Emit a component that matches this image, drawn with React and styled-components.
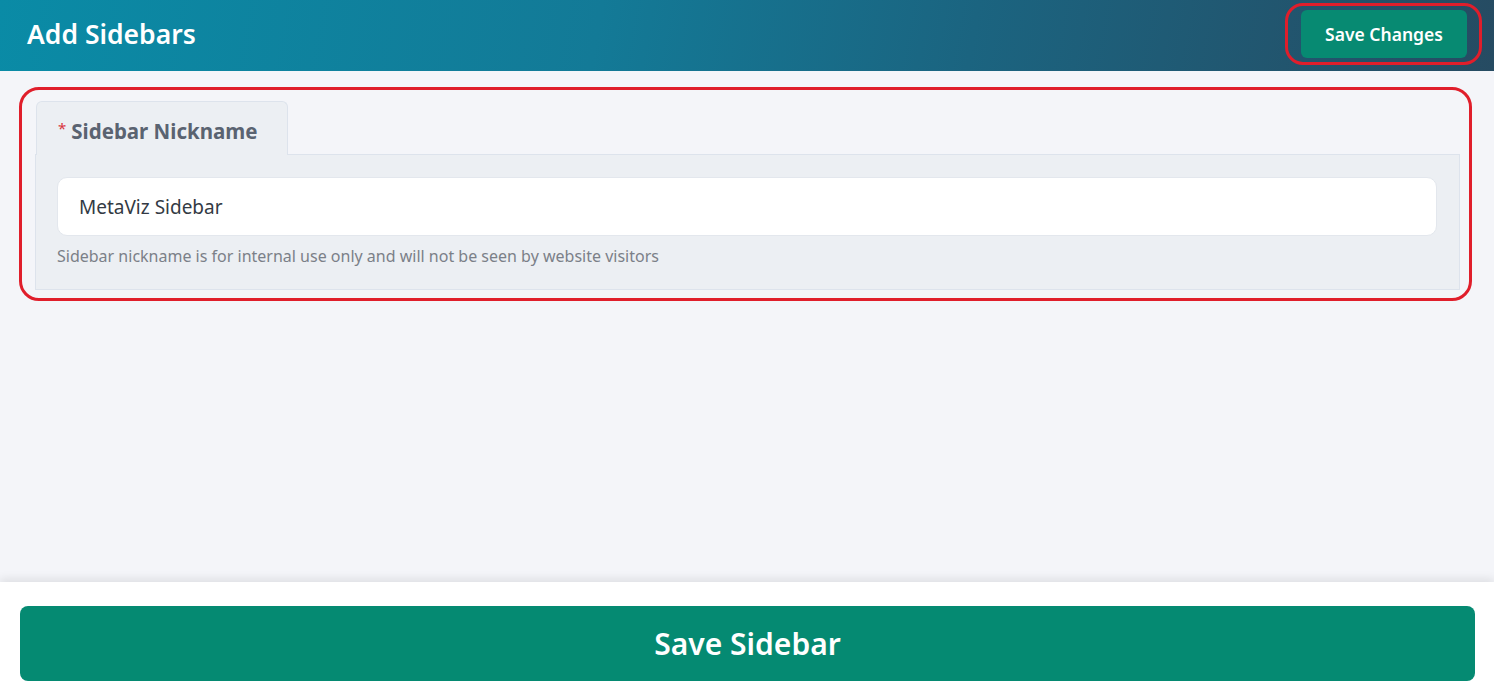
import React from "react";
import styled, { createGlobalStyle } from "styled-components";

const Global = createGlobalStyle`
  html, body { margin: 0; padding: 0; height: 100%; }
  body { font-family: "Noto Sans", "Open Sans", sans-serif; background: #f4f5f9; }
  #root { min-height: 100vh; }
  * { box-sizing: border-box; }
`;

const Page = styled.div`
  display: flex;
  flex-direction: column;
  min-height: 100vh;
`;

const Header = styled.header`
  height: 71px;
  display: flex;
  align-items: center;
  justify-content: space-between;
  padding: 0 12px 4px 27px;
  background: linear-gradient(100deg, #0a8ba6 0%, #137a97 40%, #1b6480 65%, #264b62 100%);
`;

const Title = styled.h1`
  margin: 0;
  color: #fff;
  font-size: 26.5px;
  font-weight: 600;
  letter-spacing: 0;
`;

const Highlight = styled.div`
  border: 3px solid #e01e2b;
  border-radius: ${(p) => p.$radius || 20}px;
  padding: ${(p) => p.$pad || "0"};
`;

const SmallButton = styled.button`
  display: block;
  border: none;
  background: #078a72;
  color: #fff;
  font-family: inherit;
  font-size: 17.5px;
  font-weight: 600;
  height: 48px;
  width: 166px;
  border-radius: 6px;
  cursor: pointer;
`;

const Main = styled.main`
  flex: 1;
  padding: 16px 22px 0 19px;
`;

const Frame = styled(Highlight)`
  padding: 11px 9px 8px 13px;
`;

const Tab = styled.div`
  display: flex;
  align-items: center;
  gap: 5px;
  width: 252px;
  height: 54px;
  margin-left: 1px;
  padding: 0 0 0 21px;
  background: #eceff3;
  border: 1px solid #dde3ec;
  border-bottom: none;
  border-radius: 6px 6px 0 0;
  color: #5a6371;
  font-size: 20.5px;
  font-weight: 700;
  position: relative;
  z-index: 1;
  margin-bottom: -1px;
  line-height: 1;
  padding-top: 6px;
`;

const Star = styled.span`
  color: #d9363e;
  font-size: 15px;
  font-weight: 400;
  margin-top: -6px;
`;

const Panel = styled.div`
  background: #eceff3;
  border: 1px solid #dde3ec;
  padding: 22px 22px 22px 21px;
`;

const Input = styled.input`
  display: block;
  width: 100%;
  height: 59px;
  border: 1px solid #e3e7ed;
  border-radius: 10px;
  background: #fff;
  padding: 0 21px;
  font-family: inherit;
  font-size: 19px;
  color: #333a44;
  outline: none;
`;

const Help = styled.p`
  margin: 9px 0 0;
  font-size: 16px;
  color: #7b8088;
`;

const Footer = styled.footer`
  background: #fff;
  padding: 24px 19px 19px 20px;
  box-shadow: 0 -4px 8px rgba(0, 0, 0, 0.08);
`;

const BigButton = styled.button`
  display: block;
  width: 100%;
  height: 75px;
  border: none;
  border-radius: 8px;
  background: #058a72;
  color: #fff;
  font-family: inherit;
  font-size: 30px;
  font-weight: 600;
  cursor: pointer;
`;

export default function App() {
  return (
    <Page>
      <Global />
      <Header>
        <Title>Add Sidebars</Title>
        <Highlight $radius={18} $pad="4px 12px 4px 13px">
          <SmallButton>Save Changes</SmallButton>
        </Highlight>
      </Header>
      <Main>
        <Frame>
          <Tab>
            <Star>*</Star>
            Sidebar Nickname
          </Tab>
          <Panel>
            <Input defaultValue="MetaViz Sidebar" />
            <Help>Sidebar nickname is for internal use only and will not be seen by website visitors</Help>
          </Panel>
        </Frame>
      </Main>
      <Footer>
        <BigButton>Save Sidebar</BigButton>
      </Footer>
    </Page>
  );
}
